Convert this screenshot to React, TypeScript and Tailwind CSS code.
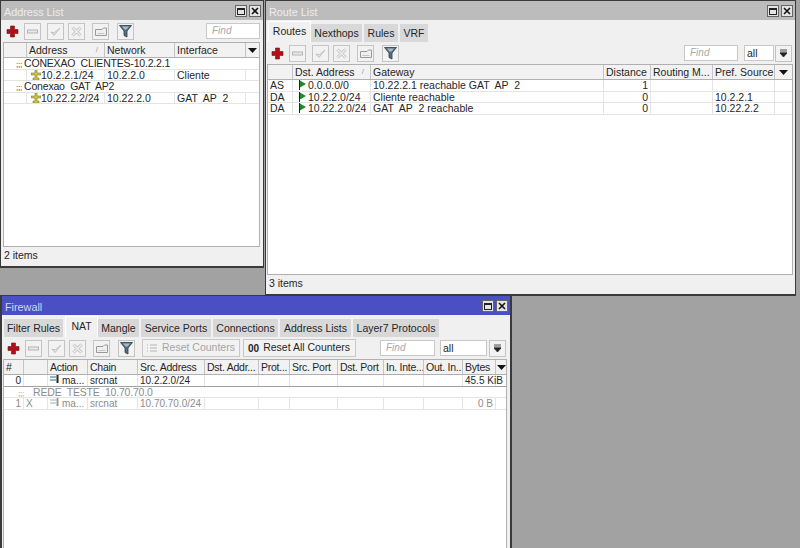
import React from "react";

const F = "font-['Liberation_Sans',Arial,sans-serif]";

function Plus() {
  return (
    <svg width="13" height="13" viewBox="0 0 13 13">
      <path d="M4.500 1h4v3.500H12v4H8.500V12h-4V8.500H1v-4h3.500z" fill="#b01018" stroke="#6e1015" strokeWidth="0.6" />
    </svg>
  );
}
function Minus() {
  return (
    <svg width="13" height="13" viewBox="0 0 13 13">
      <rect x="1.500" y="5" width="10" height="3" fill="#e8e8e8" stroke="#b4b4b4" />
    </svg>
  );
}
function Check() {
  return (
    <svg width="13" height="13" viewBox="0 0 13 13">
      <path d="M2 7l3 3.500L11 3l-6 5z" fill="#ececec" stroke="#c0c0c0" strokeWidth="1" />
    </svg>
  );
}
function XIcon() {
  return (
    <svg width="13" height="13" viewBox="0 0 13 13">
      <path d="M2.500 2.500l8 8M10.500 2.500l-8 8" stroke="#bcbcbc" strokeWidth="3" />
      <path d="M2.500 2.500l8 8M10.500 2.500l-8 8" stroke="#f0f0f0" strokeWidth="1.500" />
    </svg>
  );
}
function Note() {
  return (
    <svg width="14" height="13" viewBox="0 0 14 13">
      <path d="M1.500 4.500h6.500l1.500-1.500h3v7.500h-11z" fill="#f0f0f0" stroke="#999" />
      <path d="M3.500 8.500h7" stroke="#c4c4c4" />
    </svg>
  );
}
function Filter() {
  return (
    <svg width="13" height="14" viewBox="0 0 13 14">
      <path d="M0.500 1.500h12L8 7v6l-3-1.500V7z" fill="#566f82" stroke="#2e3a44" strokeWidth="0.8" />
      <path d="M3 2.500h7L7.500 5.500h-2z" fill="#a8bac6" />
    </svg>
  );
}
function Btn({ children }: { children?: React.ReactNode }) {
  return (
    <div className="w-[17px] h-[17px] border border-[#c4c4c4] bg-[#f2f2f2] flex items-center justify-center shrink-0">
      {children}
    </div>
  );
}
function Tools() {
  return (
    <div className="flex items-center shrink-0">
      <div className="w-[18px] h-[17px] flex items-center justify-center shrink-0"><Plus /></div>
      <div className="ml-[3px]"><Btn><Minus /></Btn></div>
      <div className="ml-[6px]"><Btn><Check /></Btn></div>
      <div className="ml-[4px]"><Btn><XIcon /></Btn></div>
      <div className="ml-[7px]"><Btn><Note /></Btn></div>
      <div className="ml-[8px]"><Btn><Filter /></Btn></div>
    </div>
  );
}
function Title({ text, active = false }: { text: string; active?: boolean }) {
  return (
    <div className={`h-[19px] flex items-center justify-between pl-[3px] pr-[2px] pt-[1px] shrink-0 ${active ? "bg-[#4a4fc4] text-[#cfd8f2]" : "bg-[#bcbcbc] text-[#ececec]"}`}>
      <span className="text-[10.8px] leading-[14px] pt-[2px]">{text}</span>
      <div className="flex gap-[2px] text-black">
        <div className="w-[12px] h-[12px] border border-[#666] bg-[#e4e4e4] flex items-center justify-center">
          <div className="w-[8px] h-[7px] border border-[#222] border-t-2" />
        </div>
        <div className="w-[12px] h-[12px] border border-[#666] bg-[#e4e4e4] flex items-center justify-center">
          <svg width="8" height="8" viewBox="0 0 8 8"><path d="M1 1l6 6M7 1L1 7" stroke="#111" strokeWidth="1.600" /></svg>
        </div>
      </div>
    </div>
  );
}
function Arrow() {
  return <svg width="9" height="5" viewBox="0 0 9 5" className="mx-auto"><path d="M0 0h9L4.500 5z" fill="#111" /></svg>;
}
function Head({ widths, cols, sortAt = -1, tight = "" }: { widths: number[]; cols: string[]; sortAt?: number; tight?: string }) {
  return (
    <div className={`flex h-[15px] bg-[#f2f2f2] border-b border-[#b0b0b0] shrink-0 ${tight}`}>
      {cols.map((c, i) => (
        <div key={i} style={{ width: widths[i] }} className="relative shrink-0 border-r border-[#c4c4c4] pl-[2px] leading-[14px] whitespace-nowrap overflow-hidden">
          {c}
          {i === sortAt && <span className="absolute right-[6px] top-0 text-[8px] text-[#999]">/</span>}
        </div>
      ))}
      <div className="flex-1 flex items-center"><Arrow /></div>
    </div>
  );
}
function Row({ widths, cells, right = [], tone = "", line = "border-[#e4e4e4]" }: { widths: number[]; cells: React.ReactNode[]; right?: number[]; tone?: string; line?: string }) {
  return (
    <div className={`flex h-[11.5px] ${tone} border-b ${line} shrink-0`}>
      {cells.map((c, i) => (
        <div key={i} style={{ width: widths[i] }} className={`shrink-0 border-r border-[#e4e4e4] px-[2px] leading-[11px] whitespace-pre ${right.includes(i) ? "text-right" : ""}`}>
          {c}
        </div>
      ))}
      <div className="flex-1" />
    </div>
  );
}
function Comment({ text, tone = "", pl = "pl-[12px]", gap = "mr-[2px]" }: { text: string; tone?: string; pl?: string; gap?: string }) {
  return (
    <div className={`h-[11.5px] leading-[11px] ${pl} whitespace-pre shrink-0 border-b border-[#e4e4e4] tracking-[-0.2px] ${tone}`}>
      <span className={`${gap} text-[8px]`}>;;;</span>
      {text}
    </div>
  );
}
function Status({ text }: { text: string }) {
  return <div className="h-[19px] leading-[16px] pl-[3px] shrink-0">{text}</div>;
}
function Find({ w }: { w: string }) {
  return <div className={`${w} h-[16px] bg-white border border-[#c8c8c8] pl-[5px] leading-[14px] italic text-[10px] text-[#a8a8a8] shrink-0`}>Find</div>;
}
function AddrIcon() {
  return (
    <svg width="10" height="10" viewBox="0 0 10 10" className="inline-block align-[-1px]">
      <path d="M4 0h2v3h4v2H6v3h2v2H2V8h2V5H0V3h4z" fill="#cfc640" stroke="#5d6a20" strokeWidth="0.5" />
    </svg>
  );
}
function Flag() {
  return (
    <svg width="7" height="10" viewBox="0 0 7 10" className="inline-block mr-[2px] align-[-1px]">
      <path d="M0.500 0v10" stroke="#222" />
      <path d="M1 0.500l6 3.500-6 3.500z" fill="#1d8a2e" />
    </svg>
  );
}
function NatIcon({ faded = false }: { faded?: boolean }) {
  return (
    <svg width="10" height="8" viewBox="0 0 10 8" className="inline-block mr-[2px] align-[1px]">
      <path d="M0 2h6M0 5h6" stroke={faded ? "#a0b0b8" : "#2e6f8e"} />
      <path d="M7.500 0v8" stroke={faded ? "#999" : "#222"} strokeWidth="2" />
    </svg>
  );
}
function DownBtn() {
  return (
    <Btn>
      <svg width="9" height="9" viewBox="0 0 9 9"><path d="M1 1h7M1 3h7M4.500 8L1 4h7z" stroke="#222" fill="#222" strokeWidth="0.8" /></svg>
    </Btn>
  );
}
function Tab({ text, active = false, w }: { text: string; active?: boolean; w: string }) {
  return (
    <div className={`${w} text-center shrink-0 ${active ? "h-[21px] bg-[#f0f0f0] border-t border-x border-white leading-[19px]" : "h-[18px] mt-[3px] bg-[#d8d8d8] border-r-2 border-[#f0f0f0] leading-[18px]"}`}>
      {text}
    </div>
  );
}

const aw = [23, 78, 70, 71];
const rw = [25, 78, 233, 47, 62, 62];
const fw = [20, 24, 40, 50, 67, 54, 31, 48, 46, 40, 39, 33];

export default function App() {
  return (
    <div className={`relative w-[800px] h-[548px] overflow-hidden bg-[#a2a2a2] text-[10.5px] text-[#262626] ${F}`}>
      {/* Address List */}
      <div className="absolute left-0 top-0 w-[264px] h-[268px] bg-[#f0f0f0] border-x border-b-2 border-t border-[#3a3a3a] flex flex-col">
        <Title text="Address List" />
        <div className="flex items-center h-[22px] pl-[2px] pr-[3px] justify-between shrink-0">
          <Tools />
          <Find w="w-[54px]" />
        </div>
        <div className="ml-[2px] mr-[3px] flex-1 flex flex-col bg-white border border-[#b0b0b0] min-h-0">
          <Head widths={aw} cols={["", "Address", "Network", "Interface"]} sortAt={1} />
          <Comment text="CONEXAO  CLIENTES-10.2.2.1" />
          <Row widths={aw} cells={["", <span className="pl-[2px]"><AddrIcon />10.2.2.1/24</span>, "10.2.2.0", "Cliente"]} />
          <Comment text="Conexao  GAT  AP2" />
          <Row widths={aw} cells={["", <span className="pl-[2px]"><AddrIcon />10.22.2.2/24</span>, "10.22.2.0", "GAT  AP  2"]} />
        </div>
        <Status text="2 items" />
      </div>

      {/* Route List */}
      <div className="absolute left-[265px] top-0 w-[531px] h-[296px] bg-[#f0f0f0] border-x border-b-2 border-t border-[#3a3a3a] flex flex-col">
        <Title text="Route List" />
        <div className="flex h-[22px] pl-[2px] pt-[1px] shrink-0">
          <Tab text="Routes" active w="w-[43px]" />
          <Tab text="Nexthops" w="w-[53px]" />
          <Tab text="Rules" w="w-[36px]" />
          <Tab text="VRF" w="w-[30px]" />
        </div>
        <div className="flex items-center h-[22px] pl-[2px] pr-[3px] justify-between shrink-0">
          <Tools />
          <div className="flex items-center">
            <Find w="w-[54px]" />
            <div className="ml-[6px] mr-[1px] w-[30px] h-[16px] bg-white border border-[#c8c8c8] pl-[2px] leading-[14px]">all</div>
            <DownBtn />
          </div>
        </div>
        <div className="ml-[1px] mr-[2px] flex-1 flex flex-col bg-white border border-[#b0b0b0] min-h-0">
          <Head widths={rw} cols={["", "Dst. Address", "Gateway", "Distance", "Routing M...", "Pref. Source"]} sortAt={1} />
          <Row widths={rw} right={[3]} cells={["AS", <span className="pl-[4px]"><Flag />0.0.0.0/0</span>, "10.22.2.1 reachable GAT  AP  2", "1", "", ""]} />
          <Row widths={rw} right={[3]} cells={["DA", <span className="pl-[4px]"><Flag />10.2.2.0/24</span>, "Cliente reachable", "0", "", "10.2.2.1"]} />
          <Row widths={rw} right={[3]} cells={["DA", <span className="pl-[4px]"><Flag />10.22.2.0/24</span>, "GAT  AP  2 reachable", "0", "", "10.22.2.2"]} />
        </div>
        <Status text="3 items" />
      </div>

      {/* Firewall */}
      <div className="absolute left-0 top-[295px] w-[512px] h-[253px] bg-[#f0f0f0] border-x-2 border-t border-[#3a3a3a] flex flex-col">
        <Title text="Firewall" active />
        <div className="flex h-[22px] pl-[2px] pt-[1px] shrink-0">
          <Tab text="Filter Rules" w="w-[61px]" />
          <Tab text="NAT" active w="w-[33px]" />
          <Tab text="Mangle" w="w-[43px]" />
          <Tab text="Service Ports" w="w-[72px]" />
          <Tab text="Connections" w="w-[67px]" />
          <Tab text="Address Lists" w="w-[73px]" />
          <Tab text="Layer7 Protocols" w="w-[88px]" />
        </div>
        <div className="flex items-center h-[22px] pl-[2px] shrink-0">
          <Tools />
          <div className="ml-[7px] w-[98px] h-[18px] border border-[#c8c8c8] bg-[#f2f2f2] flex items-center pl-[4px] text-[#a4a4a4] whitespace-nowrap shrink-0">
            <svg width="10" height="8" viewBox="0 0 10 8" className="mr-[5px]"><path d="M3 1h7M3 4h7M3 7h7M0 1h1M0 4h1M0 7h1" stroke="#b4b4b4" /></svg>
            Reset Counters
          </div>
          <div className="ml-[3px] w-[113px] h-[18px] border border-[#c8c8c8] bg-[#f2f2f2] flex items-center pl-[4px] whitespace-nowrap shrink-0">
            <span className="font-bold mr-[4px] text-[10px]">00</span>
            Reset All Counters
          </div>
          <div className="ml-[24px]"><Find w="w-[55px]" /></div>
          <div className="ml-[5px] mr-[2px] w-[47px] h-[16px] bg-white border border-[#c8c8c8] pl-[2px] leading-[14px] shrink-0">all</div>
          <DownBtn />
        </div>
        <div className="ml-[1px] mr-[3px] flex-1 flex flex-col bg-white border-x border-t border-[#b0b0b0] min-h-0">
          <Head tight="tracking-[-0.25px]" widths={fw} cols={["#", "", "Action", "Chain", "Src. Address", "Dst. Addr...", "Prot...", "Src. Port", "Dst. Port", "In. Inte...", "Out. In...", "Bytes"]} />
          <Row widths={fw} right={[0, 11]} tone="text-[10px]" line="border-[#a0a0a0]" cells={["0", "", <span><NatIcon />ma...</span>, "srcnat", "10.2.2.0/24", "", "", "", "", "", "", "45.5 KiB"]} />
          <Comment text="REDE  TESTE  10.70.70.0" tone="text-[#8c8c8c]" pl="pl-[14px]" gap="mr-[9px]" />
          <Row widths={fw} right={[0, 11]} tone="text-[#8c8c8c] text-[10px]" cells={["1", "X", <span><NatIcon faded />ma...</span>, "srcnat", "10.70.70.0/24", "", "", "", "", "", "", "0 B"]} />
        </div>
      </div>
    </div>
  );
}
